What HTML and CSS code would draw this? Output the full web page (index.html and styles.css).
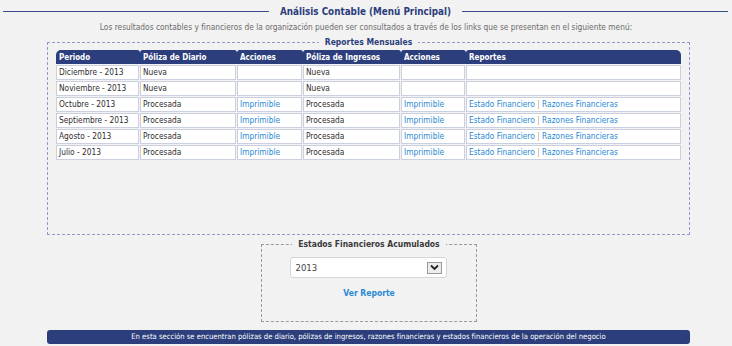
FILE: index.html
```html
<!DOCTYPE html>
<html lang="es">
<head>
<meta charset="utf-8">
<title>Análisis Contable</title>
<link rel="stylesheet" href="styles.css">
</head>
<body>
<div class="page">
  <div class="title-row">
    <span class="rule"></span>
    <h1 class="title">Análisis Contable (Menú Principal)</h1>
    <span class="rule"></span>
  </div>
  <p class="intro">Los resultados contables y financieros de la organización pueden ser consultados a través de los links que se presentan en el siguiente menú:</p>

  <fieldset class="box monthly">
    <legend class="legend legend-blue">Reportes Mensuales</legend>
    <table class="grid">
      <thead>
        <tr>
          <th class="c1">Periodo</th>
          <th class="c2">Póliza de Diario</th>
          <th class="c3">Acciones</th>
          <th class="c4">Póliza de Ingresos</th>
          <th class="c5">Acciones</th>
          <th class="c6">Reportes</th>
        </tr>
      </thead>
      <tbody>
        <tr><td>Diciembre - 2013</td><td>Nueva</td><td></td><td>Nueva</td><td></td><td></td></tr>
        <tr><td>Noviembre - 2013</td><td>Nueva</td><td></td><td>Nueva</td><td></td><td></td></tr>
        <tr><td>Octubre - 2013</td><td>Procesada</td><td><a class="link">Imprimible</a></td><td>Procesada</td><td><a class="link">Imprimible</a></td><td><a class="link">Estado Financiero</a> <span class="sep">|</span> <a class="link">Razones Financieras</a></td></tr>
        <tr><td>Septiembre - 2013</td><td>Procesada</td><td><a class="link">Imprimible</a></td><td>Procesada</td><td><a class="link">Imprimible</a></td><td><a class="link">Estado Financiero</a> <span class="sep">|</span> <a class="link">Razones Financieras</a></td></tr>
        <tr><td>Agosto - 2013</td><td>Procesada</td><td><a class="link">Imprimible</a></td><td>Procesada</td><td><a class="link">Imprimible</a></td><td><a class="link">Estado Financiero</a> <span class="sep">|</span> <a class="link">Razones Financieras</a></td></tr>
        <tr><td>Julio - 2013</td><td>Procesada</td><td><a class="link">Imprimible</a></td><td>Procesada</td><td><a class="link">Imprimible</a></td><td><a class="link">Estado Financiero</a> <span class="sep">|</span> <a class="link">Razones Financieras</a></td></tr>
      </tbody>
    </table>
  </fieldset>

  <fieldset class="box accum">
    <legend class="legend legend-grey">Estados Financieros Acumulados</legend>
    <div class="select">
      <span class="select-value">2013</span>
      <span class="select-btn">
        <svg width="9" height="7" viewBox="0 0 9 7"><path d="M1 1.5 L4.5 5 L8 1.5" fill="none" stroke="#222" stroke-width="1.8"/></svg>
      </span>
    </div>
    <a class="ver">Ver Reporte</a>
  </fieldset>

  <div class="footer-bar">En esta sección se encuentran pólizas de diario, pólizas de ingresos, razones financieras y estados financieros de la operación del negocio</div>
</div>
</body>
</html>
```

FILE: styles.css
```css
html, body {
  margin: 0;
  padding: 0;
  background: #f2f2f2;
}
body {
  font-family: "DejaVu Sans Condensed", "Liberation Sans", sans-serif;
  font-size: 8px;
  color: #333;
}
.page {
  width: 732px;
  height: 346px;
  padding-top: 4px;
  box-sizing: border-box;
}
.title-row {
  display: flex;
  align-items: center;
  gap: 11px;
  padding: 0 4px 0 3px;
  height: 15px;
}
.rule {
  flex: 1;
  height: 1px;
  background: #3b4d8a;
}
.title {
  margin: 0;
  font-size: 9.8px;
  font-weight: bold;
  color: #2c3e7c;
  white-space: nowrap;
}
.intro {
  margin: 2px 0 0 0;
  text-align: center;
  color: #6b6b6b;
  font-size: 8.3px;
  line-height: 12px;
}
.box {
  margin: 0;
  padding: 0;
  border: 1px dashed #8e9bc6;
  box-sizing: border-box;
}
.monthly {
  margin: 4px 0 0 47px;
  width: 643px;
  height: 198px;
  padding: 2px 7px 0 7px;
}
.legend {
  margin: 0 auto;
  padding: 0 6px;
  font-weight: bold;
  font-size: 8.5px;
  line-height: 10px;
}
.legend-blue { color: #2c3e7c; }
.legend-grey { color: #3a3a3a; }
.grid {
  width: 100%;
  border-collapse: separate;
  border-spacing: 1px;
  table-layout: fixed;
}
.grid th {
  background: #2c3e7c;
  color: #fff;
  font-weight: bold;
  text-align: left;
  height: 14px;
  padding: 0 3px;
  border-radius: 3px 3px 0 0;
  box-shadow: 1px 0 0 #2c3e7c;
}
.grid th.c1 { border-radius: 5px 3px 0 0; width: 77px; }
.grid th.c2 { width: 90px; }
.grid th.c3 { width: 59px; }
.grid th.c4 { width: 91px; }
.grid th.c5 { width: 58px; }
.grid th.c6 { border-radius: 3px 5px 0 0; box-shadow: none; }
.grid td {
  background: #fff;
  border: 1px solid #cbd0e1;
  height: 13px;
  padding: 0 2px;
  white-space: nowrap;
  overflow: hidden;
  line-height: 13px;
  font-size: 8.3px;
  color: #2e2e2e;
}
.link {
  color: #2a89d2;
  text-decoration: none;
}
.sep { color: #c9a064; }
.accum {
  margin: 4px 0 0 261px;
  width: 216px;
  height: 83px;
  padding: 0;
  display: flex;
  flex-direction: column;
  align-items: center;
  border-color: #9a9a9a;
}
.select {
  margin: 8px 0 0 -2px;
  width: 157px;
  height: 21px;
  background: #fff;
  border: 1px solid #d6d6d6;
  border-radius: 3px;
  box-sizing: border-box;
  display: flex;
  align-items: center;
  justify-content: space-between;
  padding: 0 4px 0 5px;
}
.select-value {
  font-size: 9.5px;
  color: #444;
}
.select-btn {
  width: 15px;
  height: 12px;
  border: 1px solid #9a9a9a;
  background: #ececec;
  display: flex;
  align-items: center;
  justify-content: center;
  box-sizing: border-box;
}
.ver {
  margin-top: 10px;
  color: #2a89d2;
  font-weight: bold;
  font-size: 8.5px;
}
.footer-bar {
  margin: 8px 0 0 47px;
  width: 643px;
  height: 14px;
  background: #2c3e7c;
  border-radius: 3px;
  color: #fff;
  font-size: 7.6px;
  line-height: 14px;
  text-align: center;
  white-space: nowrap;
}
```
